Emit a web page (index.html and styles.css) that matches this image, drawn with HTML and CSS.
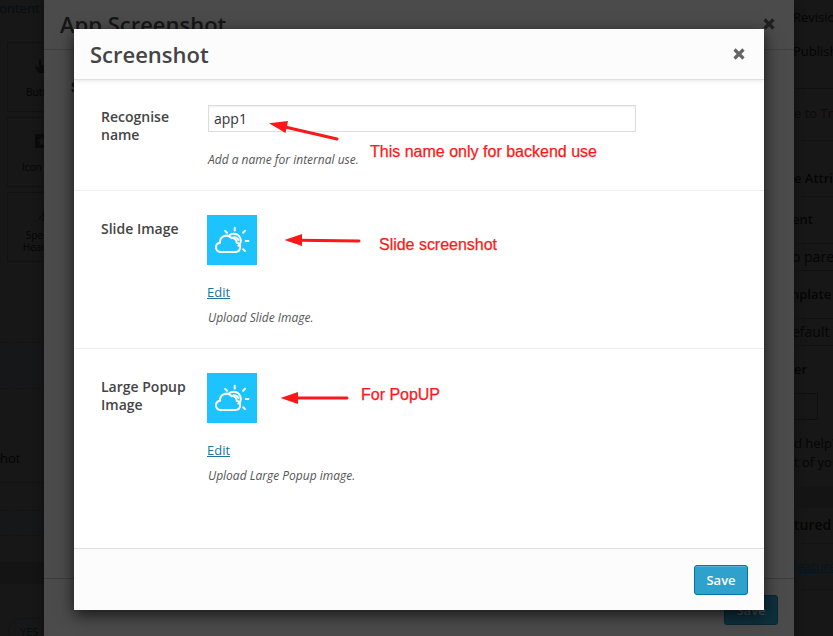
FILE: index.html
```html
<!DOCTYPE html>
<html lang="en">
<head>
<meta charset="utf-8">
<title>Screenshot</title>
<link rel="stylesheet" href="styles.css">
</head>
<body>
<svg class="defs" aria-hidden="true">
  <symbol id="close" viewBox="0 0 12 12"><path d="M1.500 1.500l9 9M10.500 1.500l-9 9" fill="none" stroke="currentColor" stroke-width="3.2"/></symbol>
  <symbol id="weather" viewBox="0 0 50 50">
    <g fill="none" stroke="#fff" stroke-width="2" stroke-linecap="round" stroke-linejoin="round">
      <path d="M13 37H28.500a4.700 4.700 0 0 0 1.300-9.200C29.500 24.500 27 22.700 24.500 23.200 22.700 20.800 20 20.200 17.500 21 14.300 22 12.800 24.500 13 27.700A4.700 4.700 0 0 0 13 37z"/>
      <path d="M21.500 20.800C24 18 29 18 31.700 20.600 34.700 24 34.500 28.800 31.300 30.600"/>
      <path d="M25.500 22.800C28 21.500 30.500 23 31.500 25"/>
      <path d="M27.700 12.800v2.700M18.200 16l1.800 1.800M38 15.800l-1.900 1.900M38.700 26h2.700M36.200 34.300l1.700 1.700"/>
    </g>
  </symbol>
</svg>
<div class="page">
  <aside class="left">
    <p class="crumb">Content M</p>
    <div class="tile"><svg viewBox="0 0 16 16"><path d="M5 1h2v6h5v4l-2 4H5L1 9l1-1 3 2z"/></svg><span>Button</span></div>
    <div class="tile"><svg viewBox="0 0 16 16"><path fill-rule="evenodd" d="M1 1h14v14H1zM8 3L6.500 6.500 3 7l3 2-1 4 3-2 3 2-1-4 3-2-3.500-.5z"/></svg><span>Icon Box</span></div>
    <div class="tile"><svg viewBox="0 0 16 16"><path d="M1 14c5 0 7-5 9-12l2-1-2 13H8l1-5H6c-1 4-3 6-5 5z"/></svg><span>Special<br>Heading</span></div>
    <div class="stripe"></div>
    <p class="shot">hot</p>
    <div class="stripe low"></div>
    <div class="band"></div>
    <div class="pill">YES</div>
  </aside>

  <section class="back">
    <header class="back-head"><h2>App Screenshot</h2><svg class="x"><use href="#close"/></svg></header>
    <div class="back-body"><b>S</b></div>
    <footer class="back-foot"><span class="btn dim">Save</span></footer>
  </section>

  <aside class="right">
    <p class="r1">Revisions</p>
    <p class="r2">Publish</p>
    <p class="r3">e to Trash</p>
    <p class="r4">e Attributes</p>
    <p class="r5">ent</p>
    <p class="select">o parent)</p>
    <p class="r6">nplate</p>
    <p class="select">efault Template</p>
    <p class="r7">er</p>
    <div class="order"></div>
    <p class="r8">d help?</p>
    <p class="r9">t of your</p>
    <div class="gap"></div>
    <p class="r10">tured</p>
    <p class="r11">featured</p>
  </aside>
</div>

<main class="modal">
  <header class="head"><h1>Screenshot</h1><svg class="x"><use href="#close"/></svg></header>
  <section class="row first">
    <label class="label" for="name">Recognise name</label>
    <div class="field">
      <input id="name" type="text" value="app1">
      <p class="help">Add a name for internal use.</p>
    </div>
  </section>
  <section class="row second">
    <div class="label">Slide Image</div>
    <div class="field">
      <svg class="thumb"><use href="#weather"/></svg>
      <a class="edit" href="#">Edit</a>
      <p class="help">Upload Slide Image.</p>
    </div>
  </section>
  <section class="row third">
    <div class="label">Large Popup Image</div>
    <div class="field">
      <svg class="thumb"><use href="#weather"/></svg>
      <a class="edit" href="#">Edit</a>
      <p class="help">Upload Large Popup image.</p>
    </div>
  </section>
  <footer class="foot"><button class="btn">Save</button></footer>
</main>

<svg class="marks" viewBox="0 0 833 636">
  <g fill="#fb1818" stroke="none">
    <path d="M269 123.300L288 121 285.500 133z"/>
    <path d="M284.500 240L302 234v12z"/>
    <path d="M280.500 398L298 392v12z"/>
  </g>
  <g stroke="#fb1818" stroke-width="3" stroke-linecap="round">
    <path d="M285 127L337 139"/><path d="M300 240.300L359 241"/><path d="M296 398H347"/>
  </g>
  <g class="note">
    <text x="370" y="157" textLength="227">This name only for backend use</text>
    <text x="379" y="250" textLength="118">Slide screenshot</text>
    <text x="361" y="400" textLength="79">For PopUP</text>
  </g>
</svg>
</body>
</html>
```
FILE: styles.css
```css
* { box-sizing: border-box; }
body { margin: 0; width: 833px; height: 636px; overflow: hidden; background: #171717; font-family: "Open Sans", sans-serif; font-size: 14px; color: #444; }
p, h1, h2 { margin: 0; }
.defs { position: absolute; width: 0; height: 0; }

.page { display: grid; grid-template-columns: 44px 750px 39px; height: 636px; }
.left, .right { overflow: hidden; white-space: nowrap; color: #050505; display: flex; flex-direction: column; }
.crumb { height: 42px; margin-left: -9px; font-size: 13px; line-height: 17px; color: #050e13; flex: none; }
.tile { flex: none; width: 70px; height: 70px; margin: 0 0 5px 7px; border: 1px solid #121212; display: flex; flex-direction: column; align-items: center; font-size: 10px; line-height: 12px; text-align: center; padding-top: 14px; }
.tile svg { width: 16px; height: 18px; fill: #0b0b0b; margin-bottom: 11px; flex: none; }
.tile:nth-child(4) svg { margin-bottom: 6px; height: 16px; }
.stripe { height: 47px; margin-top: 75px; border: dashed #131313; border-width: 1px 0; background: #161718; flex: none; }
.shot { height: 94px; padding-top: 60px; line-height: 18px; font-size: 13px; border-bottom: 1px solid #131313; flex: none; }
.stripe.low { height: 26px; margin-top: 27px; }
.band { height: 22px; margin-top: 26px; background: #141414; flex: none; }
.pill { margin: 34px 0 0 8px; width: 60px; height: 28px; border: 1px solid #10151a; border-radius: 14px; font-size: 11px; line-height: 25px; padding-left: 11px; color: #050e13; flex: none; }

.right p { flex: none; line-height: 20px; font-size: 13px; }
.right .r1 { height: 34px; padding-top: 7px; text-indent: -1px; }
.right .r2 { height: 55px; padding-top: 7px; text-indent: -1px; border-bottom: 1px solid #101010; }
.right .r3 { height: 52px; padding-top: 14px; border-bottom: 1px solid #131313; color: #100707; }
.right .r4 { height: 56px; padding-top: 27px; border-bottom: 1px solid #131313; font-weight: 600; }
.right .r5 { height: 46px; padding-top: 12px; margin-left: -2px; font-weight: 600; }
.right .select { height: 28px; border: solid #111; border-width: 1px 0; line-height: 26px; font-size: 14px; text-indent: -2px; }
.right .r6 { height: 47px; padding-top: 13px; margin-left: -3px; font-weight: 600; }
.right .r7 { height: 47px; padding-top: 13px; font-weight: 600; }
.order { width: 24px; height: 27px; border: 1px solid #0f0f0f; border-left: 0; flex: none; }
.right .r8 { height: 33px; padding-top: 13px; }
.right .r9 { height: 33px; margin-top: -1px; margin-bottom: 1px; }
.gap { height: 22px; background: #141414; flex: none; }
.right .r10 { height: 36px; padding-top: 7px; border-bottom: 1px solid #131313; font-size: 14px; font-weight: 600; }
.right .r11 { height: 46px; padding-top: 12px; text-indent: -2px; border-bottom: 1px solid #131313; color: #051520; text-decoration: underline; }

.back { background: #4b4b4b; display: flex; flex-direction: column; box-shadow: 0 2px 10px rgba(0,0,0,.4); }
.back-head { height: 50px; border-bottom: 1px solid #3f3f3f; display: flex; justify-content: space-between; padding: 9px 19px 0 16px; color: #161616; }
.back-head h2 { font-size: 22px; line-height: 30px; font-weight: 600; }
.back-head .x { margin-top: 9px; color: #202020; }
.back-body { flex: 1; padding: 28px 27px; color: #161616; line-height: 18px; font-weight: 600; }
.back-foot { height: 58px; border-top: 1px solid #3c3c3c; display: flex; justify-content: flex-end; padding: 16px 16px 0; }
.x { width: 12px; height: 12px; }

.modal { position: absolute; left: 74px; top: 29px; width: 690px; height: 581px; background: #fff; box-shadow: 0 5px 15px rgba(0,0,0,.7); display: flex; flex-direction: column; }
.head { height: 51px; background: #fcfcfc; border-bottom: 1px solid #dfdfdf; box-shadow: 0 2px 4px -1px rgba(0,0,0,.1); display: flex; justify-content: space-between; padding: 10px 19px 0 16px; flex: none; }
.head h1 { font-size: 22px; line-height: 31px; font-weight: 600; }
.head .x { margin-top: 9px; color: #666; }
.row { display: grid; grid-template-columns: 106px 429px; padding: 25px 27px 0; border-bottom: 1px solid #eee; }
.first { height: 111px; }
.second { height: 158px; padding-top: 24px; }
.third { flex: 1; padding-top: 24px; border: 0; }
.label { font-weight: 600; line-height: 18px; padding: 5px 15px 0 0; }
.first .label { padding-top: 3px; }
.field { display: flex; flex-direction: column; align-items: flex-start; }
input { width: 428px; height: 27px; margin-left: 1px; border: 1px solid #ddd; padding: 0 5px; font: 14px "Open Sans", sans-serif; color: #333; box-shadow: inset 0 1px 2px rgba(0,0,0,.07); }
.help { font-size: 12px; font-style: italic; line-height: 18px; color: #555; margin-left: 1px; }
.first .help { margin-top: 19px; }
.thumb { width: 50px; height: 50px; background: #1cc3ff; }
.edit { font-size: 13px; line-height: 18px; color: #21759b; margin-top: 18px; }
.edit + .help { margin-top: 8px; }
.foot { height: 62px; background: #fcfcfc; border-top: 1px solid #dfdfdf; display: flex; justify-content: flex-end; padding: 16px 16px 0; }
.btn { width: 54px; height: 30px; padding: 0; border: 1px solid #0074a2; border-radius: 3px; background: #2ea2cc; box-shadow: inset 0 1px 0 rgba(120,200,230,.5); color: #fff; font: 600 13px/28px "Open Sans", sans-serif; text-align: center; }
.dim { background: #0e303d; border-color: #082736; color: #4b4b4b; box-shadow: none; }

.marks { position: absolute; left: 0; top: 0; width: 833px; height: 636px; pointer-events: none; }
.note { font: 16px "Liberation Sans", Arial, sans-serif; fill: #fb1818; stroke: #fb1818; stroke-width: .25px; }
```
